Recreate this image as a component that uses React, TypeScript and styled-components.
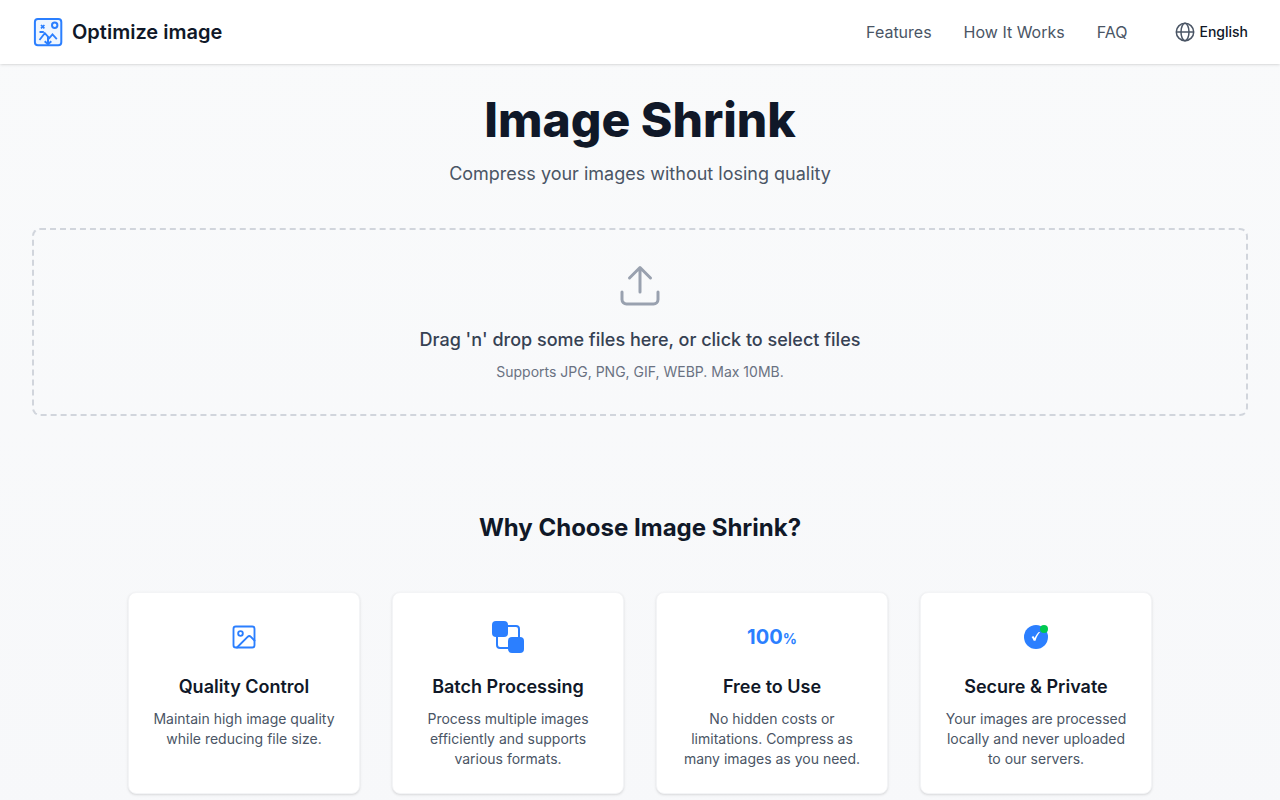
import React from "react";
import styled, { createGlobalStyle } from "styled-components";

const GlobalStyle = createGlobalStyle`
  *, *::before, *::after { box-sizing: border-box; }
  body {
    margin: 0;
    background: #f9fafb;
    color: #101828;
    font-family: Inter, "Liberation Sans", sans-serif;
    font-size: 16px;
    line-height: 24px;
  }
  h1, h2, h3, p { margin: 0; }
`;

const Page = styled.div`
  min-height: 100vh;
  background: linear-gradient(to bottom, #f9fafb, #f7f8fa);
`;

const Header = styled.header`
  position: relative;
  display: flex;
  align-items: center;
  justify-content: space-between;
  height: 64px;
  padding: 0 32px;
  background: #fff;
  box-shadow: 0 1px 3px rgba(0, 0, 0, 0.1), 0 1px 2px -1px rgba(0, 0, 0, 0.1);
`;

const Brand = styled.a`
  display: flex;
  align-items: center;
  gap: 8px;
  color: #101828;
  font-size: 20px;
  font-weight: 600;
  line-height: 28px;
  text-decoration: none;
`;

const Nav = styled.nav`
  display: flex;
  align-items: center;
  gap: 32px;
`;

const NavLink = styled.a`
  color: #4a5565;
  text-decoration: none;
`;

const LanguageButton = styled.button`
  display: flex;
  align-items: center;
  gap: 4px;
  margin-left: 16px;
  padding: 0;
  border: 0;
  background: none;
  color: #101828;
  font: inherit;
  font-size: 14px;
  font-weight: 500;
  line-height: 20px;
  cursor: pointer;
`;

const Main = styled.main`
  padding: 32px 32px 48px;
`;

const Hero = styled.section`
  text-align: center;
`;

const Title = styled.h1`
  font-size: 48px;
  font-weight: 800;
  line-height: 48px;
`;

const Subtitle = styled.p`
  margin-top: 16px;
  color: #4a5565;
  font-size: 18px;
  line-height: 28px;
`;

const DropZone = styled.button`
  display: flex;
  flex-direction: column;
  align-items: center;
  width: 100%;
  margin-top: 40px;
  padding: 32px;
  border: 2px dashed #d1d5dc;
  border-radius: 8px;
  background: none;
  font: inherit;
  cursor: pointer;
`;

const DropLabel = styled.span`
  margin-top: 16px;
  color: #364153;
  font-size: 18px;
  font-weight: 500;
  line-height: 28px;
`;

const DropHint = styled.span`
  margin-top: 8px;
  color: #6a7282;
  font-size: 14px;
  line-height: 20px;
`;

const Features = styled.section`
  max-width: 1024px;
  margin: 96px auto 0;
`;

const SectionTitle = styled.h2`
  font-size: 24px;
  font-weight: 700;
  line-height: 32px;
  text-align: center;
`;

const CardGrid = styled.div`
  display: grid;
  grid-template-columns: repeat(4, 1fr);
  gap: 32px;
  margin-top: 48px;
`;

const Card = styled.article`
  padding: 24px;
  border: 1px solid #f3f4f6;
  border-radius: 8px;
  background: #fff;
  box-shadow: 0 1px 3px rgba(0, 0, 0, 0.1), 0 1px 2px -1px rgba(0, 0, 0, 0.1);
  text-align: center;
`;

const CardIcon = styled.div`
  display: flex;
  align-items: center;
  justify-content: center;
  height: 40px;
  color: #2b7fff;
`;

const CardTitle = styled.h3`
  margin-top: 16px;
  font-size: 18px;
  font-weight: 600;
  line-height: 28px;
`;

const CardText = styled.p`
  margin-top: 8px;
  color: #4a5565;
  font-size: 14px;
  line-height: 20px;
`;

const Percent = styled.span`
  font-size: 20px;
  font-weight: 700;
  line-height: 28px;

  small {
    font-size: 14px;
    line-height: 14px;
  }
`;

const Logo = () => (
  <svg width="32" height="32" viewBox="0 0 32 32" fill="none" stroke="#2b7fff" strokeWidth="2" aria-hidden="true">
    <rect x="2.9" y="2.9" width="26.4" height="26.4" rx="3" fill="#eff6ff" />
    <path d="M9 9l3.400 3.400M12.400 9L9 12.400" strokeWidth="1.700" />
    <circle cx="22.7" cy="9.3" r="2.700" />
    <path d="M7.5 16h4.3M7.5 24l5.300-6.900 4.500 5 3.200-3.700 4.300 4.800" strokeWidth="1.800" />
    <path d="M16 21v7M12.700 25.200L16 28.200l3.300-3" />
  </svg>
);

const Globe = () => (
  <svg width="20" height="20" viewBox="0 0 20 20" fill="none" stroke="#4a5565" strokeWidth="1.5" aria-hidden="true">
    <circle cx="10" cy="10" r="8.7" />
    <ellipse cx="10" cy="10" rx="4" ry="8.7" />
    <path d="M1.3 10h17.4" />
  </svg>
);

const UploadIcon = () => (
  <svg width="48" height="48" viewBox="0 0 24 24" fill="none" stroke="#99a1af" strokeWidth="1.5" strokeLinecap="round" strokeLinejoin="round" aria-hidden="true">
    <path d="M3 15v3.750A2.250 2.250 0 0 0 5.250 21h13.500A2.250 2.250 0 0 0 21 18.750V15M6.750 8L12 2.750 17.250 8M12 3v12" />
  </svg>
);

const PictureIcon = () => (
  <svg width="28" height="28" viewBox="0 0 24 24" fill="none" stroke="currentColor" strokeWidth="1.6" strokeLinecap="round" strokeLinejoin="round" aria-hidden="true">
    <rect x="3" y="3" width="18" height="18" rx="2" />
    <circle cx="9" cy="9" r="2" />
    <path d="M21 15l-3.086-3.086a2 2 0 0 0-2.828 0L6 21" />
  </svg>
);

const BatchIcon = () => (
  <svg width="32" height="32" viewBox="0 0 32 32" aria-hidden="true">
    <rect x="5" y="5" width="22" height="22" rx="3" fill="none" stroke="currentColor" strokeWidth="2" />
    <rect width="16" height="16" rx="4" fill="currentColor" />
    <rect x="16" y="16" width="16" height="16" rx="4" fill="currentColor" />
  </svg>
);

const SecureIcon = () => (
  <svg width="24" height="24" viewBox="0 0 24 24" aria-hidden="true">
    <circle cx="12" cy="12" r="12" fill="currentColor" />
    <path d="M7.6 12l1.700-1.100 1.400 2C11.700 10.500 13.100 8.400 14.800 6.900l1.300.2C13.900 9.600 12.500 12.300 11.500 15.800h-1.800C9.100 14.200 8.500 13 7.600 12z" fill="#fff" />
    <circle cx="20" cy="4" r="4" fill="#00c950" />
  </svg>
);

const features = [
  {
    title: "Quality Control",
    text: "Maintain high image quality while reducing file size.",
    icon: <PictureIcon />,
  },
  {
    title: "Batch Processing",
    text: "Process multiple images efficiently and supports various formats.",
    icon: <BatchIcon />,
  },
  {
    title: "Free to Use",
    text: "No hidden costs or limitations. Compress as many images as you need.",
    icon: (
      <Percent>
        100<small>%</small>
      </Percent>
    ),
  },
  {
    title: "Secure & Private",
    text: "Your images are processed locally and never uploaded to our servers.",
    icon: <SecureIcon />,
  },
];

export default function App() {
  return (
    <Page>
      <GlobalStyle />
      <Header>
        <Brand href="#">
          <Logo />
          Optimize image
        </Brand>
        <Nav>
          <NavLink href="#features">Features</NavLink>
          <NavLink href="#how-it-works">How It Works</NavLink>
          <NavLink href="#faq">FAQ</NavLink>
          <LanguageButton type="button">
            <Globe />
            English
          </LanguageButton>
        </Nav>
      </Header>
      <Main>
        <Hero>
          <Title>Image Shrink</Title>
          <Subtitle>Compress your images without losing quality</Subtitle>
        </Hero>
        <DropZone type="button">
          <UploadIcon />
          <DropLabel>Drag 'n' drop some files here, or click to select files</DropLabel>
          <DropHint>Supports JPG, PNG, GIF, WEBP. Max 10MB.</DropHint>
        </DropZone>
        <Features id="features">
          <SectionTitle>Why Choose Image Shrink?</SectionTitle>
          <CardGrid>
            {features.map((feature) => (
              <Card key={feature.title}>
                <CardIcon>{feature.icon}</CardIcon>
                <CardTitle>{feature.title}</CardTitle>
                <CardText>{feature.text}</CardText>
              </Card>
            ))}
          </CardGrid>
        </Features>
      </Main>
    </Page>
  );
}
